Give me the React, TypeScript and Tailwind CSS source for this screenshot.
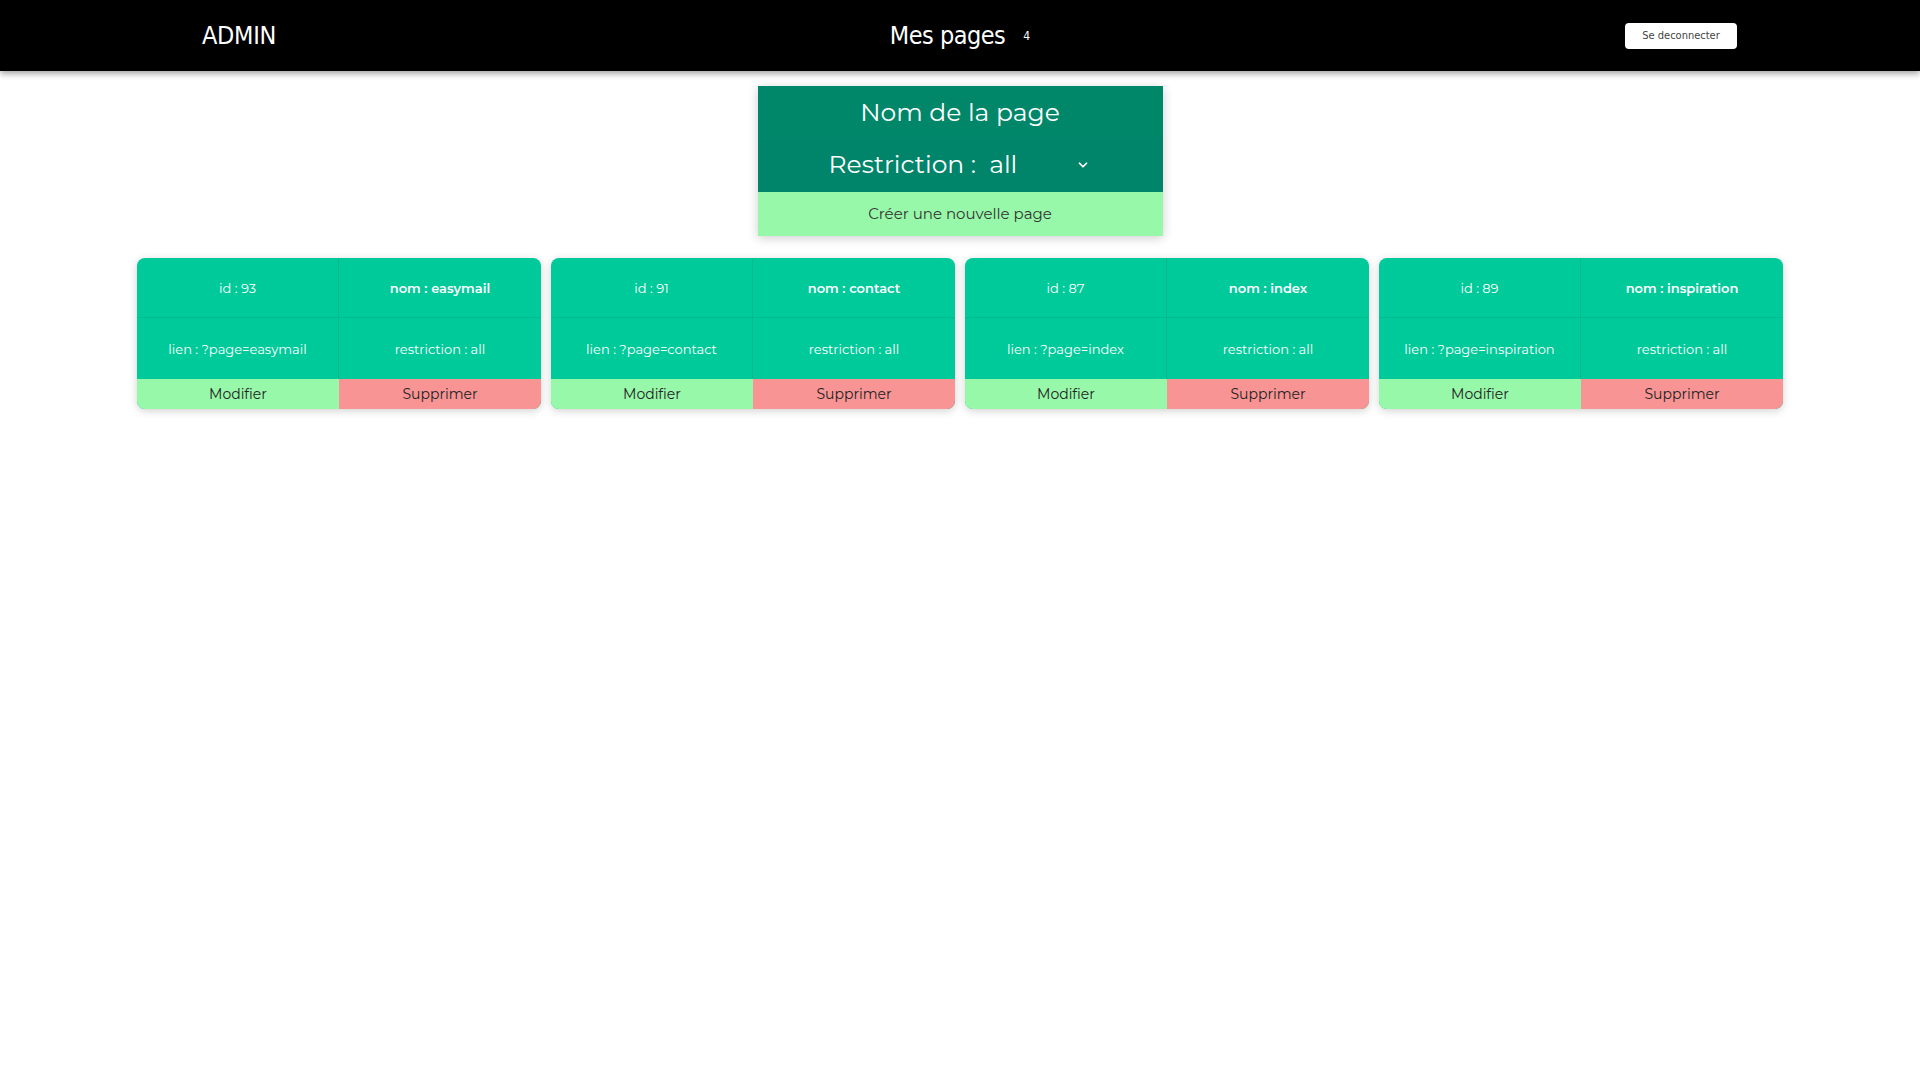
import { ChevronDown } from "lucide-react";

const pages = [
  { id: 93, nom: "easymail", lien: "?page=easymail", restriction: "all" },
  { id: 91, nom: "contact", lien: "?page=contact", restriction: "all" },
  { id: 87, nom: "index", lien: "?page=index", restriction: "all" },
  { id: 89, nom: "inspiration", lien: "?page=inspiration", restriction: "all" },
];

const mont = "font-['Montserrat','Lato','Open_Sans',sans-serif]";

const PageCard = ({ page }: { page: (typeof pages)[number] }) => {
  return (
    <div className="mx-[5px] w-[404px] overflow-hidden rounded-lg bg-[#00c99a] shadow-[0_2px_8px_rgba(0,0,0,0.18)]">
      <div className="grid grid-cols-2 text-[13px] text-white">
        <div className="flex h-[60px] items-center justify-center border-r border-b border-[#00bb8e] pt-[2px]">
          id : {page.id}
        </div>
        <div className="flex h-[60px] items-center justify-center border-b border-[#00bb8e] pt-[2px] font-semibold">
          nom : {page.nom}
        </div>
        <div className="flex h-[61px] items-center justify-center border-r border-[#00bb8e] pt-[2px]">
          lien : {page.lien}
        </div>
        <div className="flex h-[61px] items-center justify-center pt-[2px]">
          restriction : {page.restriction}
        </div>
      </div>
      <div className="grid grid-cols-2 text-[14px] text-[#222]">
        <button className="h-[30px] bg-[#98f8aa]">Modifier</button>
        <button className="h-[30px] bg-[#f89494]">Supprimer</button>
      </div>
    </div>
  );
};

export default function App() {
  return (
    <div className={`min-h-screen bg-white ${mont}`}>
      <header className="grid h-[71px] grid-cols-[1fr_auto_1fr] items-center bg-black shadow-[0_3px_6px_rgba(0,0,0,0.35)] font-['DejaVu_Sans_Condensed','Liberation_Sans_Narrow',sans-serif] text-white">
        <div className="pl-[202px] text-[25px] tracking-[-0.3px]">ADMIN</div>
        <div className="flex items-center">
          <span className="text-[25px] tracking-[-0.5px]">Mes pages</span>
          <span className="ml-[18px] text-[12px]">4</span>
        </div>
        <div className="flex justify-end pr-[183px]">
          <button className="h-[26px] w-[112px] rounded bg-white pt-[1px] text-[11px] text-[#444]">
            Se deconnecter
          </button>
        </div>
      </header>

      <div className="mx-auto mt-[15px] w-[405px] shadow-[0_2px_10px_rgba(0,0,0,0.2)]">
        <div className="flex h-[52px] items-center justify-center bg-[#00876a] pt-[2px] text-[25px] text-white">
          Nom de la page
        </div>
        <div className="flex h-[54px] items-center bg-[#00846a] pr-[73px] pl-[71px] text-[25px] text-white">
          <span>Restriction :</span>
          <span className="ml-[13px]">all</span>
          <ChevronDown className="ml-auto h-[14px] w-[14px]" strokeWidth={3} />
        </div>
        <button className="h-[44px] w-full bg-[#98f8aa] pt-[1px] text-[15px] text-[#333]">
          Créer une nouvelle page
        </button>
      </div>

      <div className="mt-[22px] flex justify-center">
        {pages.map((p) => (
          <PageCard key={p.id} page={p} />
        ))}
      </div>
    </div>
  );
}
